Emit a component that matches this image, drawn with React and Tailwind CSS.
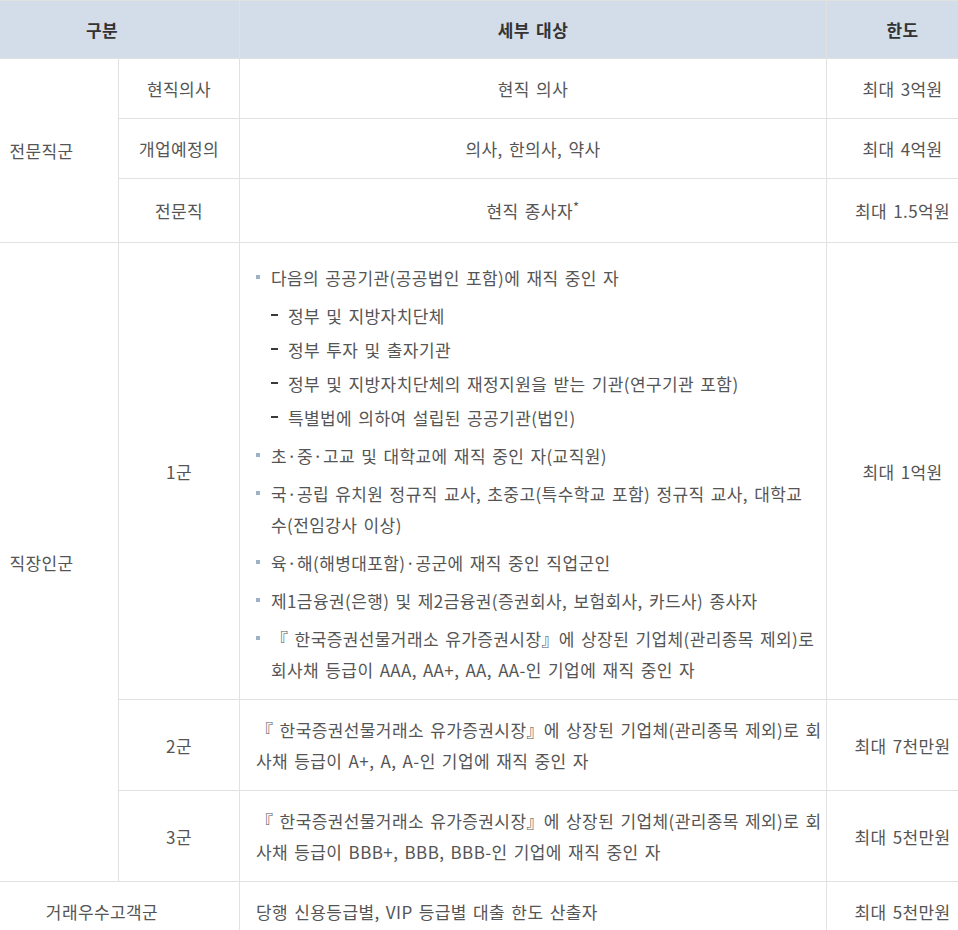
import React from "react"

const cell = "border border-[#e1e1e1] px-[8px] py-[14px] leading-[31px] align-middle"

function Item({ children, sub }) {
  return (
    <li className="mt-[7px] flex first:mt-0">
      <span className="mt-[13px] mr-[11px] h-[4px] w-[4px] shrink-0 bg-[#9db1c7]" />
      <div>
        {children}
        {sub && (
          <ul className="mt-[7px]">
            {sub.map((s) => (
              <li key={s} className="mt-[3px] flex first:mt-0">
                <span className="mt-[14px] mr-[10px] h-[2px] w-[7px] shrink-0 bg-[#3a3a3a]" />
                <span>{s}</span>
              </li>
            ))}
          </ul>
        )}
      </div>
    </li>
  )
}

export default function App() {
  return (
    <div
      className="w-[958px] overflow-hidden bg-white text-[17px] tracking-[0.4px] text-[#555] [word-spacing:2px]"
      style={{ fontFamily: '"Noto Sans CJK KR", "Noto Sans", sans-serif' }}
    >
      <table className="ml-[-36px] w-[1014px] table-fixed border-collapse text-center">
        <colgroup>
          <col className="w-[154px]" />
          <col className="w-[121px]" />
          <col className="w-[587px]" />
          <col className="w-[152px]" />
        </colgroup>
        <thead>
          <tr className="bg-[#d3dde9] font-bold text-[#333]">
            <th colSpan={2} className="border border-[#e1e1e1] py-[13px] leading-[31px]">구분</th>
            <th className="border border-[#e1e1e1] py-[13px] leading-[31px]">세부 대상</th>
            <th className="border border-[#e1e1e1] py-[13px] leading-[31px]">한도</th>
          </tr>
        </thead>
        <tbody>
          <tr>
            <td rowSpan={3} className={cell}>전문직군</td>
            <td className={`${cell} py-[13.5px]`}>현직의사</td>
            <td className={`${cell} py-[13.5px]`}>현직 의사</td>
            <td className={`${cell} py-[13.5px]`}>최대 3억원</td>
          </tr>
          <tr>
            <td className={cell}>개업예정의</td>
            <td className={cell}>의사, 한의사, 약사</td>
            <td className={cell}>최대 4억원</td>
          </tr>
          <tr>
            <td className={`${cell} h-[64px]`}>전문직</td>
            <td className={cell}>
              현직 종사자<sup className="text-[13px]">*</sup>
            </td>
            <td className={cell}>최대 1.5억원</td>
          </tr>
          <tr>
            <td rowSpan={3} className={cell}>직장인군</td>
            <td className={cell}>1군</td>
            <td className="border border-[#e1e1e1] pt-[19px] pr-[6px] pb-[14px] pl-[16px] text-left leading-[31px] whitespace-nowrap">
              <ul>
                <Item sub={["정부 및 지방자치단체", "정부 투자 및 출자기관", "정부 및 지방자치단체의 재정지원을 받는 기관(연구기관 포함)", "특별법에 의하여 설립된 공공기관(법인)"]}>
                  다음의 공공기관(공공법인 포함)에 재직 중인 자
                </Item>
                <Item>초·중·고교 및 대학교에 재직 중인 자(교직원)</Item>
                <Item>
                  국·공립 유치원 정규직 교사, 초중고(특수학교 포함) 정규직 교사, 대학교
                  <br />
                  수(전임강사 이상)
                </Item>
                <Item>육·해(해병대포함)·공군에 재직 중인 직업군인</Item>
                <Item>제1금융권(은행) 및 제2금융권(증권회사, 보험회사, 카드사) 종사자</Item>
                <Item>
                  『 한국증권선물거래소 유가증권시장』에 상장된 기업체(관리종목 제외)로
                  <br />
                  회사채 등급이 AAA, AA+, AA, AA-인 기업에 재직 중인 자
                </Item>
              </ul>
            </td>
            <td className={cell}>최대 1억원</td>
          </tr>
          <tr>
            <td className={cell}>2군</td>
            <td className={`${cell} pl-[16px] text-left whitespace-nowrap`}>
              『 한국증권선물거래소 유가증권시장』에 상장된 기업체(관리종목 제외)로 회
              <br />
              사채 등급이 A+, A, A-인 기업에 재직 중인 자
            </td>
            <td className={cell}>최대 7천만원</td>
          </tr>
          <tr>
            <td className={cell}>3군</td>
            <td className={`${cell} pl-[16px] text-left whitespace-nowrap`}>
              『 한국증권선물거래소 유가증권시장』에 상장된 기업체(관리종목 제외)로 회
              <br />
              사채 등급이 BBB+, BBB, BBB-인 기업에 재직 중인 자
            </td>
            <td className={cell}>최대 5천만원</td>
          </tr>
          <tr>
            <td colSpan={2} className={cell}>거래우수고객군</td>
            <td className={`${cell} pl-[16px] text-left`}>당행 신용등급별, VIP 등급별 대출 한도 산출자</td>
            <td className={cell}>최대 5천만원</td>
          </tr>
        </tbody>
      </table>
    </div>
  )
}
